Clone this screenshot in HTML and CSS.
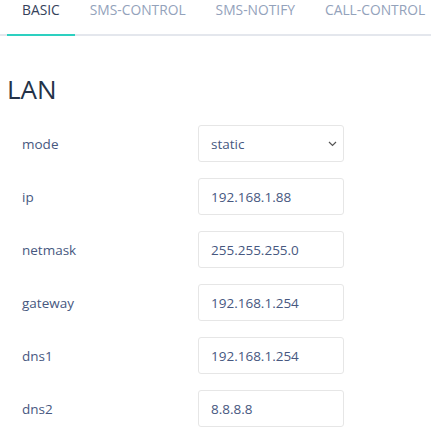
FILE: index.html
```html
<!DOCTYPE html>
<html>
<head>
<meta charset="utf-8">
<link rel="stylesheet" href="styles.css">
</head>
<body>
<div class="page">
  <div class="tabs">
    <div class="tab active">BASIC</div>
    <div class="tab">SMS-CONTROL</div>
    <div class="tab">SMS-NOTIFY</div>
    <div class="tab">CALL-CONTROL</div>
  </div>
  <h1 class="title">LAN</h1>
  <div class="form">
    <div class="row">
      <div class="label">mode</div>
      <div class="field select"><span>static</span>
        <svg class="chev" width="9" height="6" viewBox="0 0 9 6"><path d="M1 1l3.5 3.5L8 1" fill="none" stroke="#555" stroke-width="1.2"/></svg>
      </div>
    </div>
    <div class="row"><div class="label">ip</div><div class="field">192.168.1.88</div></div>
    <div class="row"><div class="label">netmask</div><div class="field">255.255.255.0</div></div>
    <div class="row"><div class="label">gateway</div><div class="field">192.168.1.254</div></div>
    <div class="row"><div class="label">dns1</div><div class="field">192.168.1.254</div></div>
    <div class="row"><div class="label">dns2</div><div class="field">8.8.8.8</div></div>
  </div>
</div>
</body>
</html>
```
FILE: styles.css
```css
html, body { margin: 0; padding: 0; background: #fff; }
body { font-family: "Open Sans", "Segoe UI", sans-serif; }
.page { padding: 0 0 0 7px; }
.tabs {
  display: flex;
  border-bottom: 2px solid #e4e7ed;
  height: 34px;
  margin-left: -7px;
  padding-left: 7px;
}
.tab {
  padding: 0 15px;
  font-size: 13.8px;
  line-height: 20px;
  color: #93a2bb;
  height: 34px;
  box-sizing: border-box;
  white-space: nowrap;
}
.tab.active {
  color: #34415a;
  border-bottom: 2px solid #2dd0c0;
  height: 36px;
}
.title {
  margin: 37px 0 0 0;
  font-size: 26px;
  font-weight: 400;
  line-height: 32px;
  color: #243248;
}
.form { margin-top: 20px; display: flex; flex-direction: column; gap: 16px; }
.row { display: flex; align-items: center; height: 37px; }
.label {
  width: 176px;
  padding-left: 15px;
  font-size: 13.5px;
  color: #47587f;
}
.field {
  width: 146px;
  height: 37px;
  box-sizing: border-box;
  border: 1px solid #e6e6e6;
  border-radius: 3px;
  padding: 0 12px;
  display: flex;
  align-items: center;
  font-size: 13.5px;
  color: #47587f;
}
.select { justify-content: space-between; padding-right: 6px; }
.chev { display: block; }
```
